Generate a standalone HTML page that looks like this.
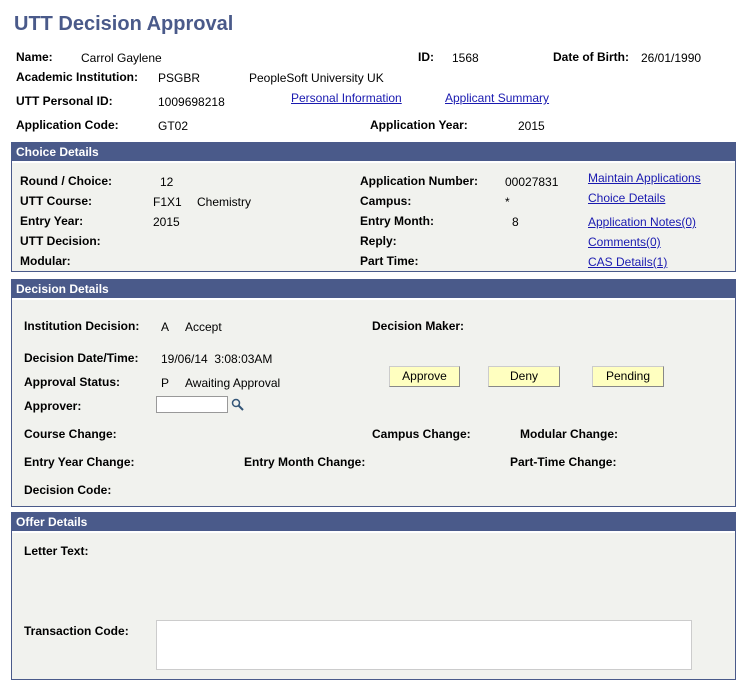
<!DOCTYPE html><html><head><style>
body{margin:0;width:752px;height:690px;background:#fff;font-family:"Liberation Sans",Arial,sans-serif;font-size:12px;color:#000;position:relative;overflow:hidden}
.a{position:absolute;white-space:nowrap;line-height:14px}
.b{font-weight:bold}
.l{color:#1a1ab0;text-decoration:underline}
.box{position:absolute;left:11px;width:723px;border:1px solid #4a5a8a;background:#f1f2ee}
.hd{position:absolute;left:0;top:0;right:0;height:18px;background:#4a5a8a;color:#fff;font-weight:bold;font-size:12px;line-height:18px;padding-left:4px;border-bottom:2px solid #fff}
.btn{position:absolute;height:19px;background:#ffffc0;border:1px solid #ccc;border-right-color:#888;border-bottom-color:#888;text-align:center;line-height:19px;font-size:12px}
</style></head><body>
<div class="a" style="left:14px;top:12px;font-size:20px;line-height:24px;font-weight:bold;color:#4a5a8a">UTT Decision Approval</div>
<div class="a b" style="left:16px;top:50px">Name:</div><div class="a" style="left:81px;top:51px">Carrol Gaylene</div>
<div class="a b" style="left:418px;top:50px">ID:</div><div class="a" style="left:452px;top:51px">1568</div>
<div class="a b" style="left:553px;top:50px">Date of Birth:</div><div class="a" style="left:641px;top:51px">26/01/1990</div>
<div class="a b" style="left:16px;top:70px">Academic Institution:</div><div class="a" style="left:158px;top:71px">PSGBR</div><div class="a" style="left:249px;top:71px">PeopleSoft University UK</div>
<div class="a b" style="left:16px;top:94px">UTT Personal ID:</div><div class="a" style="left:158px;top:95px">1009698218</div>
<div class="a l" style="left:291px;top:91px">Personal Information</div><div class="a l" style="left:445px;top:91px">Applicant Summary</div>
<div class="a b" style="left:16px;top:118px">Application Code:</div><div class="a" style="left:158px;top:119px">GT02</div>
<div class="a b" style="left:370px;top:118px">Application Year:</div><div class="a" style="left:518px;top:119px">2015</div>

<div class="box" style="top:142px;height:128px"><div class="hd">Choice Details</div></div>
<div class="a b" style="left:20px;top:174px">Round / Choice:</div><div class="a" style="left:160px;top:175px">12</div>
<div class="a b" style="left:20px;top:194px">UTT Course:</div><div class="a" style="left:153px;top:195px">F1X1</div><div class="a" style="left:197px;top:195px">Chemistry</div>
<div class="a b" style="left:20px;top:214px">Entry Year:</div><div class="a" style="left:153px;top:215px">2015</div>
<div class="a b" style="left:20px;top:234px">UTT Decision:</div>
<div class="a b" style="left:20px;top:254px">Modular:</div>
<div class="a b" style="left:360px;top:174px">Application Number:</div><div class="a" style="left:505px;top:175px">00027831</div>
<div class="a b" style="left:360px;top:194px">Campus:</div><div class="a" style="left:505px;top:195px">*</div>
<div class="a b" style="left:360px;top:214px">Entry Month:</div><div class="a" style="left:512px;top:215px">8</div>
<div class="a b" style="left:360px;top:234px">Reply:</div>
<div class="a b" style="left:360px;top:254px">Part Time:</div>
<div class="a l" style="left:588px;top:171px">Maintain Applications</div>
<div class="a l" style="left:588px;top:191px">Choice Details</div>
<div class="a l" style="left:588px;top:215px">Application Notes(0)</div>
<div class="a l" style="left:588px;top:235px">Comments(0)</div>
<div class="a l" style="left:588px;top:255px">CAS Details(1)</div>

<div class="box" style="top:279px;height:226px"><div class="hd">Decision Details</div></div>
<div class="a b" style="left:24px;top:319px">Institution Decision:</div><div class="a" style="left:161px;top:320px">A</div><div class="a" style="left:185px;top:320px">Accept</div>
<div class="a b" style="left:372px;top:319px">Decision Maker:</div>
<div class="a b" style="left:24px;top:351px">Decision Date/Time:</div><div class="a" style="left:161px;top:352px">19/06/14&nbsp; 3:08:03AM</div>
<div class="a b" style="left:24px;top:375px">Approval Status:</div><div class="a" style="left:161px;top:376px">P</div><div class="a" style="left:185px;top:376px">Awaiting Approval</div>
<div class="a b" style="left:24px;top:399px">Approver:</div>
<div style="position:absolute;left:156px;top:396px;width:70px;height:15px;background:#fff;border:1px solid #999"></div>
<svg style="position:absolute;left:231px;top:398px" width="13" height="13"><circle cx="5" cy="5" r="3.5" fill="none" stroke="#357" stroke-width="1.5"/><line x1="7.5" y1="7.5" x2="12" y2="12" stroke="#357" stroke-width="2"/></svg>
<div class="btn" style="left:389px;top:366px;width:69px">Approve</div>
<div class="btn" style="left:488px;top:366px;width:70px">Deny</div>
<div class="btn" style="left:592px;top:366px;width:70px">Pending</div>
<div class="a b" style="left:24px;top:427px">Course Change:</div>
<div class="a b" style="left:372px;top:427px">Campus Change:</div>
<div class="a b" style="left:520px;top:427px">Modular Change:</div>
<div class="a b" style="left:24px;top:455px">Entry Year Change:</div>
<div class="a b" style="left:244px;top:455px">Entry Month Change:</div>
<div class="a b" style="left:510px;top:455px">Part-Time Change:</div>
<div class="a b" style="left:24px;top:483px">Decision Code:</div>

<div class="box" style="top:512px;height:166px"><div class="hd">Offer Details</div></div>
<div class="a b" style="left:24px;top:544px">Letter Text:</div>
<div class="a b" style="left:24px;top:624px">Transaction Code:</div>
<div style="position:absolute;left:156px;top:620px;width:534px;height:48px;background:#fff;border:1px solid #ccc"></div>
</body></html>
